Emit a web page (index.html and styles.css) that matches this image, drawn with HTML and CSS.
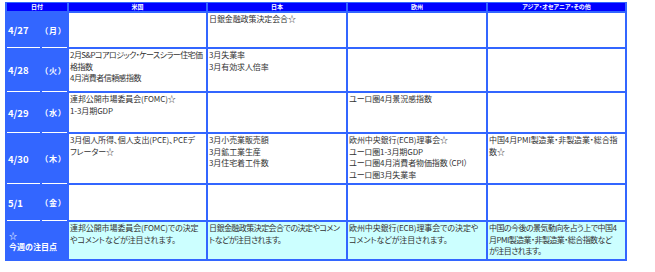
FILE: index.html
```html
<!DOCTYPE html>
<html lang="ja">
<head>
<meta charset="utf-8">
<title>今週の主な経済指標</title>
<link rel="stylesheet" href="styles.css">
</head>
<body>
<div class="sched">
  <div class="h h-date">日付</div>
  <div class="h">米国</div>
  <div class="h">日本</div>
  <div class="h">欧州</div>
  <div class="h">アジア・オセアニア・その他</div>

  <div class="d num">4/27</div><div class="d wd">（月）</div>
  <div class="c"></div>
  <div class="c">日銀金融政策決定会合☆</div>
  <div class="c"></div>
  <div class="c"></div>

  <div class="d num">4/28</div><div class="d wd">（火）</div>
  <div class="c tight">2月S&amp;Pコアロジック・ケースシラー住宅価<br>格指数<br>4月消費者信頼感指数</div>
  <div class="c">3月失業率<br>3月有効求人倍率</div>
  <div class="c"></div>
  <div class="c"></div>

  <div class="d num">4/29</div><div class="d wd">（水）</div>
  <div class="c">連邦公開市場委員会(FOMC)☆<br>1-3月期GDP</div>
  <div class="c"></div>
  <div class="c">ユーロ圏4月景況感指数</div>
  <div class="c"></div>

  <div class="d num">4/30</div><div class="d wd">（木）</div>
  <div class="c">3月個人所得、個人支出(PCE)、PCEデ<br>フレーター☆</div>
  <div class="c">3月小売業販売額<br>3月鉱工業生産<br>3月住宅着工件数</div>
  <div class="c">欧州中央銀行(ECB)理事会☆<br>ユーロ圏1-3月期GDP<br>ユーロ圏4月消費者物価指数（CPI）<br>ユーロ圏3月失業率</div>
  <div class="c">中国4月PMI製造業・非製造業・総合指<br>数☆</div>

  <div class="d num">5/1</div><div class="d wd">（金）</div>
  <div class="c"></div>
  <div class="c"></div>
  <div class="c"></div>
  <div class="c"></div>

  <div class="d focus"><span>☆</span><span>今週の注目点</span></div>
  <div class="c note">連邦公開市場委員会(FOMC)での決定<br>やコメントなどが注目されます。</div>
  <div class="c note tight">日銀金融政策決定会合での決定やコメン<br>トなどが注目されます。</div>
  <div class="c note">欧州中央銀行(ECB)理事会での決定や<br>コメントなどが注目されます。</div>
  <div class="c note tight">中国の今後の景気動向を占う上で中国4<br>月PMI製造業・非製造業・総合指数など<br>が注目されます。</div>
</div>
</body>
</html>
```

FILE: styles.css
```css
body {
  margin: 0;
  background: #ffffff;
}

.sched {
  display: grid;
  grid-template-columns: 33px 25px 137px 138px 138px 137px;
  grid-template-rows: 8px 34px 42px 39px 49px 35px 37px;
  gap: 2px;
  padding: 1px 2px 2px;
  margin: 2px 0 0 5px;
  width: fit-content;
  background: #3366ff;
  font-family: "Noto Sans CJK JP", "Noto Sans", sans-serif;
}

.h {
  background: #0000ff;
  color: #ffffff;
  font-size: 6px;
  font-weight: bold;
  line-height: 8px;
  text-align: center;
  font-feature-settings: "palt";
  white-space: nowrap;
  overflow: hidden;
}

.h-date {
  grid-column: span 2;
}

.d {
  display: flex;
  align-items: center;
  color: #ffffff;
  font-weight: bold;
  box-shadow: 0 1px 0 #ffffff;
  white-space: nowrap;
}

.num {
  font-size: 9.5px;
  padding-left: 1px;
}

.wd {
  font-size: 8px;
  padding-left: 2px;
  letter-spacing: 1px;
  font-feature-settings: "palt";
}

.focus {
  grid-column: span 2;
  flex-direction: column;
  align-items: flex-start;
  justify-content: center;
  font-size: 8px;
  line-height: 11px;
  padding-left: 2px;
  box-shadow: none;
}

.c {
  background: #ffffff;
  color: #333333;
  font-size: 8px;
  line-height: 11.7px;
  padding: 0 1px;
  font-feature-settings: "palt";
  letter-spacing: -0.1px;
  white-space: nowrap;
  overflow: hidden;
}

.c.tight {
  letter-spacing: -0.55px;
}

.c.note {
  background: #ccffff;
}
```
